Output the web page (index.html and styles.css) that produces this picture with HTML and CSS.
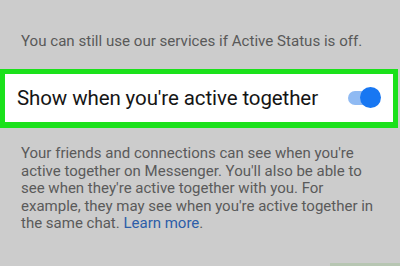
FILE: index.html
```html
<!DOCTYPE html>
<html>
<head>
<meta charset="utf-8">
<link rel="stylesheet" href="styles.css">
</head>
<body>
<div class="page">
  <p class="note">You can still use our services if Active Status is off.</p>
  <div class="row">
    <span class="label">Show when you're active together</span>
    <span class="toggle"><span class="track"></span><span class="knob"></span></span>
  </div>
  <p class="desc">Your friends and connections can see when you're active together on Messenger. You'll also be able to see when they're active together with you. For example, they may see when you're active together in the same chat. <a class="link">Learn more</a>.</p>
  <div class="footer"><span class="btn"></span></div>
</div>
</body>
</html>
```
FILE: styles.css
```css
html, body {
  margin: 0;
  padding: 0;
  width: 400px;
  height: 266px;
  overflow: hidden;
  background: #cccccc;
  font-family: Roboto, "Liberation Sans", sans-serif;
}
.page {
  display: flex;
  flex-direction: column;
  height: 266px;
}
.note {
  margin: 31px 0 0 21px;
  font-size: 15.1px;
  line-height: 20px;
  color: #595959;
}
.row {
  margin: 18px 2px 0 0;
  height: 48px;
  border: 5px solid #1be11b;
  border-bottom-width: 6px;
  background: #ffffff;
  display: flex;
  align-items: center;
  justify-content: space-between;
  padding: 0 12px 0 12px;
}
.label {
  font-size: 20.5px;
  color: #151515;
  letter-spacing: -0.1px;
}
.toggle {
  position: relative;
  width: 33px;
  height: 21px;
  display: block;
}
.track {
  position: absolute;
  left: 0;
  top: 3px;
  width: 30px;
  height: 14px;
  border-radius: 7px;
  background: #8fbaf3;
}
.knob {
  position: absolute;
  right: 0;
  top: -1px;
  width: 21px;
  height: 21px;
  border-radius: 50%;
  background: #1877f2;
}
.desc {
  margin: 17px 0 0 21px;
  width: 360px;
  font-size: 15px;
  line-height: 17.5px;
  color: #5a5a5a;
}
.link {
  color: #2d5ea8;
}
.footer {
  margin-top: auto;
  display: flex;
  justify-content: flex-end;
}
.btn {
  width: 70px;
  height: 3px;
  background: #b7c6b2;
}
```
